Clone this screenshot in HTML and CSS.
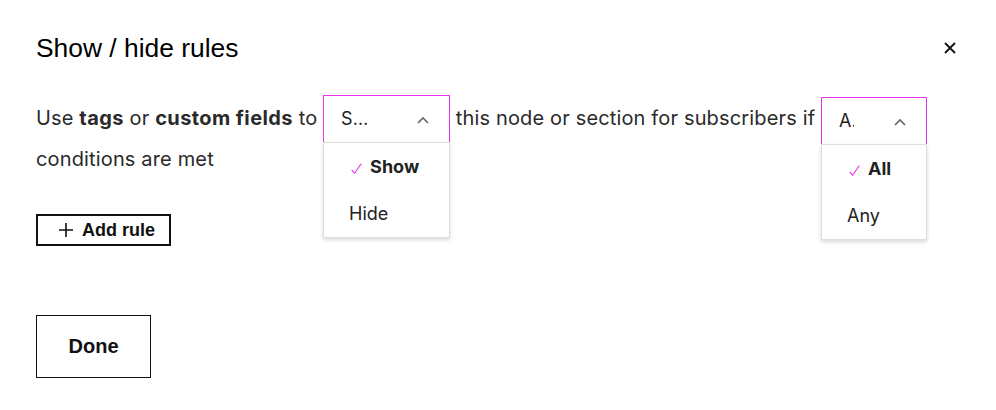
FILE: index.html
```html
<!DOCTYPE html>
<html lang="en">
<head>
    <meta charset="UTF-8">
    <meta name="viewport" content="width=device-width, initial-scale=1.0">
    <title>Show / hide rules</title>
    <link rel="stylesheet" href="styles.css">
</head>
<body>
    <div class="modal">
        <div class="modal-header">
            <h2 class="modal-title">Show / hide rules</h2>
            <button class="close-btn" aria-label="Close">
                <svg width="12" height="12" viewBox="0 0 12 12">
                    <path d="M1 1 L11 11 M11 1 L1 11" stroke="#111" stroke-width="1.8" fill="none"/>
                </svg>
            </button>
        </div>

        <p class="rule-text">Use <strong>tags</strong> or <strong>custom fields</strong> to <span class="select select-action"><span class="select-value">Show</span><svg class="chevron" width="12" height="8" viewBox="0 0 12 8"><path d="M1 7 L6 2 L11 7" stroke="#666" stroke-width="1.6" fill="none"/></svg><span class="menu"><span class="menu-item selected"><svg class="check" width="11" height="11" viewBox="0 0 11 11"><path d="M0.7 6.8 L3.6 10.2 L10.3 0.6" stroke="#e63ef0" stroke-width="1.1" fill="none"/></svg>Show</span><span class="menu-item">Hide</span></span></span> this node or section for subscribers if <span class="select select-match"><span class="select-value">All</span><svg class="chevron" width="12" height="8" viewBox="0 0 12 8"><path d="M1 7 L6 2 L11 7" stroke="#666" stroke-width="1.6" fill="none"/></svg><span class="menu"><span class="menu-item selected"><svg class="check" width="11" height="11" viewBox="0 0 11 11"><path d="M0.7 6.8 L3.6 10.2 L10.3 0.6" stroke="#e63ef0" stroke-width="1.1" fill="none"/></svg>All</span><span class="menu-item">Any</span></span></span> conditions are met</p>

        <button class="add-rule">
            <svg width="14" height="14" viewBox="0 0 14 14"><path d="M7 0 V14 M0 7 H14" stroke="#111" stroke-width="1.6" fill="none"/></svg>
            Add rule
        </button>

        <div class="modal-footer">
            <button class="done-btn">Done</button>
        </div>
    </div>
</body>
</html>
```

FILE: styles.css
```css
body {
    margin: 0;
    background-color: #fff;
    font-family: Inter, "Noto Sans", sans-serif;
    color: #2a2a2a;
}

.modal {
    padding: 33px 40px 0 36px;
}

.modal-header {
    display: flex;
    justify-content: space-between;
    align-items: center;
}

.modal-title {
    margin: 0;
    font-family: "Liberation Sans", Arial, sans-serif;
    font-size: 26.4px;
    font-weight: normal;
    line-height: 30px;
    color: #000;
}

.close-btn {
    background: none;
    border: none;
    padding: 0;
    width: 12px;
    height: 12px;
    display: flex;
}

/* Frase con los dos desplegables en linea */
.rule-text {
    margin: 32px 0 0;
    font-size: 20px;
    letter-spacing: 0.15px;
    line-height: 33px;
}

.rule-text strong {
    font-weight: 700;
    letter-spacing: 0.4px;
}

.select {
    position: relative;
    display: inline-flex;
    align-items: baseline;
    box-sizing: border-box;
    height: 48px;
    padding: 11px 20px 0 17px;
    border: 1px solid #ee33ee;
    font-size: 18px;
    letter-spacing: 0;
    line-height: 24px;
    vertical-align: baseline;
}

.select-action {
    width: 127px;
}

.select-match {
    width: 106px;
    top: 2px;
}

.select-value {
    overflow: hidden;
    white-space: nowrap;
    text-overflow: ellipsis;
    color: #222;
}

.select-action .select-value {
    width: 28px;
}

.select-match .select-value {
    width: 15px;
}

.chevron {
    margin-left: auto;
    align-self: center;
    position: relative;
    top: -5px;
}

.menu {
    position: absolute;
    left: -1px;
    right: -1px;
    top: 46px;
    display: flex;
    flex-direction: column;
    background-color: #fff;
    border: 1px solid #ddd;
    box-shadow: 0 2px 4px rgba(0,0,0,0.15);
    z-index: 2;
}

.menu-item {
    display: block;
    height: 47px;
    line-height: 47px;
    padding-left: 25px;
    color: #222;
}

.menu-item.selected {
    font-weight: 700;
    padding-left: 27px;
}

.check {
    margin-right: 8px;
    vertical-align: -1px;
}

.add-rule {
    display: flex;
    align-items: center;
    gap: 9px;
    margin-top: 38px;
    box-sizing: border-box;
    width: 135px;
    height: 32px;
    padding: 0 0 0 21px;
    background: #fff;
    border: 2px solid #111;
    font-family: "Liberation Sans", Arial, sans-serif;
    font-size: 18px;
    font-weight: bold;
    color: #111;
}

.modal-footer {
    margin-top: 69px;
}

.done-btn {
    box-sizing: border-box;
    width: 115px;
    height: 63px;
    background: #fff;
    border: 1.5px solid #111;
    font-family: "Liberation Sans", Arial, sans-serif;
    font-size: 20px;
    font-weight: bold;
    color: #111;
}
```
